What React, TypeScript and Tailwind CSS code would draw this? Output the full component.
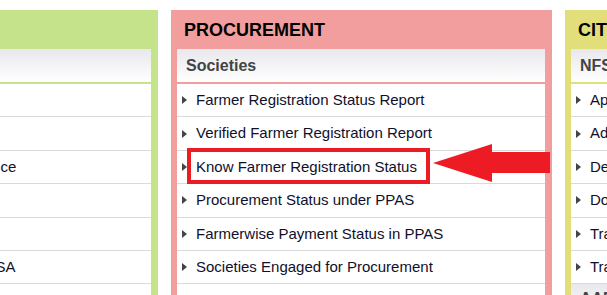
import React from "react";

type Panel = {
  title: string;
  section: string;
  bg: string;
  line: string;
  items: string[];
  next?: string;
};

const panels: Panel[] = [
  {
    title: "FARMERS CORNER",
    section: "Farmers",
    bg: "bg-[#c4e38a]",
    line: "border-[#c4e38a]",
    items: [
      "Paddy Procurement",
      "Farmer Guidelines",
      "Revised Minimum Support Price",
      "Procurement Schedule",
      "Grievance Redressal",
      "Ration Card Status under NFSA",
    ],
  },
  {
    title: "PROCUREMENT",
    section: "Societies",
    bg: "bg-[#f29e9e]",
    line: "border-[#f29e9e]",
    items: [
      "Farmer Registration Status Report",
      "Verified Farmer Registration Report",
      "Know Farmer Registration Status",
      "Procurement Status under PPAS",
      "Farmerwise Payment Status in PPAS",
      "Societies Engaged for Procurement",
    ],
  },
  {
    title: "CITIZEN CORNER",
    section: "NFSA",
    bg: "bg-[#e2df7a]",
    line: "border-[#e2df7a]",
    items: [
      "Apply for Ration Card",
      "Add Member in Ration Card",
      "Delete Member from Ration Card",
      "Download Ration Card",
      "Track Application Status",
      "Transfer of Ration Card",
    ],
    next: "AADHAAR SEEDING",
  },
];

const Arrow = () => (
  <svg className="block" width="8" height="10" viewBox="0 0 8 10">
    <polygon points="1,1 6,5 1,9" fill="#444" />
  </svg>
);

const PanelBox = ({ panel }: { panel: Panel }) => (
  <div className={`w-[381px] h-[300px] shrink-0 pl-[6px] pr-[7px] ${panel.bg}`}>
    <div className="h-[39px] flex items-center pl-[7px] text-[18px] font-bold text-black leading-none">
      {panel.title}
    </div>
    <div className="bg-white h-[260px]">
      <div
        className={`h-[35px] flex items-center pl-[9px] border-b-2 ${panel.line} bg-gradient-to-b from-[#e8e8ed] to-white text-[16px] font-bold text-[#444]`}
      >
        {panel.section}
      </div>
      {panel.items.map((item, index) => (
        <div
          key={index}
          className="h-[33.4px] flex items-center border-b border-[#dadada] pl-[4px] text-[15px] text-[#10102c] whitespace-nowrap"
        >
          <Arrow />
          <span className="ml-[7px]">{item}</span>
        </div>
      ))}
      {panel.next && (
        <div className="h-[35px] pt-[3px] pl-[9px] bg-gradient-to-b from-[#e8e8ed] to-white text-[16px] font-bold text-[#444]">
          {panel.next}
        </div>
      )}
    </div>
  </div>
);

export default function App() {
  return (
    <div className="relative w-[607px] h-[295px] overflow-hidden bg-white font-['Liberation_Sans',Arial,sans-serif]">
      <div className="flex gap-[13px] pt-[10px] ml-[-223px]">
        {panels.map((panel, index) => (
          <PanelBox key={index} panel={panel} />
        ))}
      </div>

      {/* highlight box */}
      <div className="absolute left-[187px] top-[148px] w-[243px] h-[36px] border-[4px] border-[#ed1c24]" />

      {/* pointer arrow */}
      <svg
        className="absolute left-0 top-0"
        width="607"
        height="295"
        viewBox="0 0 607 295"
      >
        <polygon
          points="433,163 492,144 492,152 550,152 550,173 492,173 492,182"
          fill="#ed1c24"
        />
      </svg>
    </div>
  );
}
